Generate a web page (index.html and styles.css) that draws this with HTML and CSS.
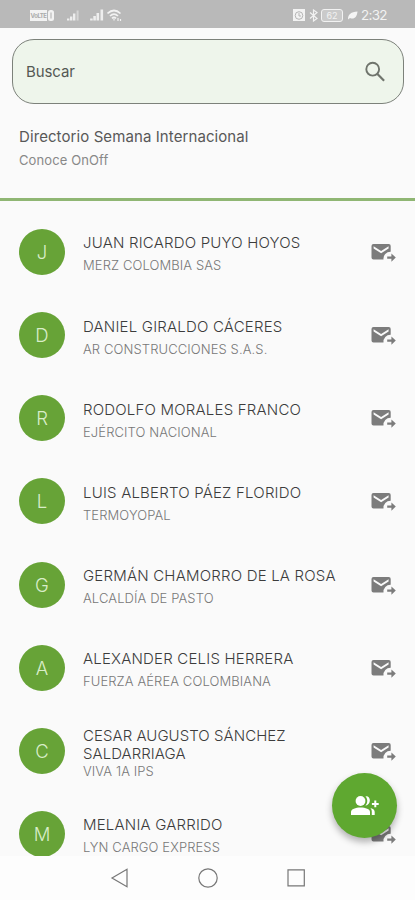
FILE: index.html
```html
<!DOCTYPE html>
<html lang="es">
<head>
    <meta charset="UTF-8">
    <meta name="viewport" content="width=device-width, initial-scale=1.0">
    <title>Directorio Semana Internacional</title>
    <link rel="stylesheet" href="styles.css">
</head>
<body>
    <svg class="symbols" aria-hidden="true">
        <symbol id="forward" viewBox="0 0 26 20">
            <path d="M2.500 1h15.200a2 2 0 0 1 2 2v5.700a7 7 0 0 0-7.200 7.800H2.500a2 2 0 0 1-2-2V3a2 2 0 0 1 2-2zM2.600 3.300v2.200l7.500 4.800 7.500-4.800V3.300l-7.500 4.800z" fill="#7c7c7c" fill-rule="evenodd"/>
            <path d="M16.200 13.400h4.200v-2.900l4.400 4.100-4.400 4.100v-2.900h-4.200z" fill="#7c7c7c"/>
        </symbol>
    </svg>
    <div class="phone">
        <div class="status-bar">
            <div class="status-left">
                <span class="volte">VoLTE</span>
                <svg class="sim" width="8" height="11" viewBox="0 0 8 11"><rect x="1" y="0" width="6" height="11" rx="2.500" fill="#f2f2f2"/><path d="M4 2.500v6" stroke="#b9b9b9" stroke-width="1.200"/></svg>
                <svg class="signal" width="14" height="12" viewBox="0 0 14 12"><path d="M2.200 11.500V9.500M5.200 11.500V7.500M8.200 11.500V4.500" stroke="#eee" stroke-width="2.400"/><path d="M11.600 11.500V1.500" stroke="#d6d6d6" stroke-width="2"/></svg>
                <svg class="signal-full" width="14" height="12" viewBox="0 0 14 12"><path d="M1.400 11.500V9.500M4.600 11.500V7M7.800 11.500V4M11.800 11.500V.5" stroke="#eee" stroke-width="2.600"/></svg>
                <svg width="16" height="13" viewBox="0 0 16 13" fill="none" stroke="#f2f2f2" stroke-width="1.700"><path d="M.5 4.500Q7 -1.500 13.500 4.500M3 7Q7 3 11 7M5 9.400Q7 7.400 9 9.400"/><path d="M7 9.500v2M11 12V9M13.500 12v-2" stroke-width="1.200"/></svg>
            </div>
            <div class="status-right">
                <svg width="12" height="12" viewBox="0 0 12 12"><path d="M0 0h12v12H0z" fill="#f2f2f2"/><circle cx="6" cy="6.500" r="3.800" fill="none" stroke="#b5b5b5"/><path d="M6 4v3h2" fill="none" stroke="#b5b5b5"/></svg>
                <svg width="9" height="13" viewBox="0 0 9 13"><path d="M1 3.500l7 6L4.500 12V1L8 3.500l-7 6" fill="none" stroke="#f2f2f2" stroke-width="1.200"/></svg>
                <span class="battery">62</span>
                <svg class="leaf" width="10" height="9" viewBox="0 0 10 9"><path d="M0 8.500C0 3 3 1 9.500.500 9 6 6 9 2 7z" fill="#f5f5f5"/></svg>
                <span class="clock">2:32</span>
            </div>
        </div>

        <main class="content">
            <div class="search">
                <span>Buscar</span>
                <svg width="22" height="22" viewBox="0 0 22 22" fill="none" stroke="#6f746c"><circle cx="8.700" cy="8.200" r="6.400" stroke-width="1.900"/><path d="M13.200 12.700l6.900 7" stroke-width="2.200"/></svg>
            </div>
            <header class="heading">
                <h1>Directorio Semana Internacional</h1>
                <p>Conoce OnOff</p>
            </header>
            <ul class="contacts">
                <li class="contact">
                    <div class="avatar">J</div>
                    <div class="info"><h2>JUAN RICARDO PUYO HOYOS</h2><p>MERZ COLOMBIA SAS</p></div>
                    <svg class="mail"><use href="#forward"/></svg>
                </li>
                <li class="contact">
                    <div class="avatar">D</div>
                    <div class="info"><h2>DANIEL GIRALDO CÁCERES</h2><p>AR CONSTRUCCIONES S.A.S.</p></div>
                    <svg class="mail"><use href="#forward"/></svg>
                </li>
                <li class="contact">
                    <div class="avatar">R</div>
                    <div class="info"><h2>RODOLFO MORALES FRANCO</h2><p>EJÉRCITO NACIONAL</p></div>
                    <svg class="mail"><use href="#forward"/></svg>
                </li>
                <li class="contact">
                    <div class="avatar">L</div>
                    <div class="info"><h2>LUIS ALBERTO PÁEZ FLORIDO</h2><p>TERMOYOPAL</p></div>
                    <svg class="mail"><use href="#forward"/></svg>
                </li>
                <li class="contact">
                    <div class="avatar">G</div>
                    <div class="info"><h2>GERMÁN CHAMORRO DE LA ROSA</h2><p>ALCALDÍA DE PASTO</p></div>
                    <svg class="mail"><use href="#forward"/></svg>
                </li>
                <li class="contact">
                    <div class="avatar">A</div>
                    <div class="info"><h2>ALEXANDER CELIS HERRERA</h2><p>FUERZA AÉREA COLOMBIANA</p></div>
                    <svg class="mail"><use href="#forward"/></svg>
                </li>
                <li class="contact two-line">
                    <div class="avatar">C</div>
                    <div class="info"><h2>CESAR AUGUSTO SÁNCHEZ SALDARRIAGA</h2><p>VIVA 1A IPS</p></div>
                    <svg class="mail"><use href="#forward"/></svg>
                </li>
                <li class="contact">
                    <div class="avatar">M</div>
                    <div class="info"><h2>MELANIA GARRIDO</h2><p>LYN CARGO EXPRESS</p></div>
                    <svg class="mail"><use href="#forward"/></svg>
                </li>
            </ul>
        </main>

        <button class="fab" aria-label="Agregar contacto">
            <svg width="30" height="22" viewBox="0 0 30 22" fill="#fff">
                <circle cx="10.500" cy="6" r="4.900"/>
                <path d="M1 20v-3c0-3 4.500-4.500 9.500-4.500s9.500 1.500 9.500 4.500v3z"/>
                <path d="M15.400 1.300c5.600-1 6.300 8.300 0 9.400 2.500-2.700 2.500-6.700 0-9.400zM20.300 13c3.200.700 4.400 2.100 4.400 4v3h-2.900v-3c0-1.700-.500-3-1.500-4z"/>
                <path d="M24.300 5.500h2v2.400h2.400v2h-2.400v2.400h-2V9.900h-2.400v-2h2.400z"/>
            </svg>
        </button>

        <nav class="nav-bar">
            <svg width="20" height="20" viewBox="0 0 20 20"><path d="M2 10L17 1.300v17.400z"/></svg>
            <svg width="20" height="20" viewBox="0 0 20 20"><circle cx="10" cy="10" r="9.200"/></svg>
            <svg width="20" height="20" viewBox="0 0 20 20"><path d="M2 1.800h16.300v16H2z"/></svg>
        </nav>
    </div>
</body>
</html>
```
FILE: styles.css
```css
body {
    margin: 0;
    font-family: Inter, "Noto Sans", sans-serif;
    background-color: #fafafa;
}

h1, h2, p, ul {
    margin: 0;
    padding: 0;
    font-weight: 400;
}

.symbols {
    display: none;
}

.phone {
    position: relative;
    display: flex;
    flex-direction: column;
    width: 415px;
    height: 900px;
    overflow: hidden;
}

.status-bar {
    flex: none;
    display: flex;
    justify-content: space-between;
    box-sizing: border-box;
    height: 28px;
    padding: 2px 29px 0 30px;
    background-color: #b9b9b9;
    color: #f2f2f2;
}

.status-left, .status-right {
    display: flex;
    align-items: center;
}

.volte {
    width: 17px;
    height: 11px;
    background-color: #f2f2f2;
    color: #aaa;
    font-size: 6px;
    font-weight: 700;
    line-height: 11px;
    text-align: center;
    letter-spacing: -0.5px;
}

.sim {
    margin-right: 11px;
}

.signal {
    margin-right: 10px;
}

.signal-full {
    margin-right: 3px;
}

.status-right {
    gap: 3.5px;
}

.status-right .leaf {
    margin-left: 1px;
}

.battery {
    width: 20px;
    height: 11px;
    border: 1px solid #f2f2f2;
    border-radius: 3px;
    background-color: #cacaca;
    font-size: 9px;
    line-height: 11px;
    text-align: center;
}

.clock {
    width: 25px;
    font-size: 13.5px;
    letter-spacing: -0.7px;
    white-space: nowrap;
}

.content {
    flex: none;
    height: 828px;
    overflow: hidden;
}

.search {
    display: flex;
    align-items: center;
    justify-content: space-between;
    box-sizing: border-box;
    height: 65px;
    margin: 11px 11px 0 12px;
    padding: 0 17px 0 13px;
    border: 1px solid #7c817a;
    border-radius: 22px;
    background-color: #eef5eb;
    color: #555954;
    font-size: 15px;
    letter-spacing: -0.1px;
}

.heading {
    box-sizing: border-box;
    height: 97px;
    padding: 23px 19px 0;
    border-bottom: 3px solid #8fb673;
}

.heading h1 {
    color: #585858;
    font-size: 15px;
    line-height: 20px;
    letter-spacing: 0.09px;
}

.heading p {
    margin-top: 4px;
    color: #888;
    font-size: 13px;
    line-height: 18px;
    letter-spacing: 0.1px;
}

.contacts {
    padding-top: 9.4px;
    list-style: none;
}

.contact {
    display: flex;
    align-items: center;
    box-sizing: border-box;
    height: 83.15px;
    padding: 0 18px 0 19px;
}

.avatar {
    flex: none;
    width: 46px;
    height: 46px;
    margin-right: 18px;
    border-radius: 50%;
    background-color: #67a337;
    color: #d9edc9;
    font-size: 18.5px;
    font-weight: 300;
    line-height: 47px;
    text-align: center;
}

.info {
    flex: 1;
    padding-top: 4px;
}

.info h2 {
    max-width: 260px;
    color: #3c3c3c;
    font-size: 15px;
    font-weight: 300;
    line-height: 19px;
    letter-spacing: 0.2px;
}

.info p {
    margin-top: 5px;
    color: #777;
    font-size: 13px;
    font-weight: 300;
    line-height: 17px;
    letter-spacing: 0.1px;
}

.two-line .info h2 {
    line-height: 18px;
    letter-spacing: 0.05px;
}

.two-line .info p {
    margin-top: 0;
    line-height: 16px;
}

.mail {
    flex: none;
    width: 26px;
    height: 20px;
    margin-top: 2px;
}

.fab {
    position: absolute;
    right: 18px;
    bottom: 62px;
    display: flex;
    align-items: center;
    justify-content: center;
    width: 65px;
    height: 65px;
    padding: 0;
    border: none;
    border-radius: 50%;
    background-color: #5fa830;
    box-shadow: 0 4px 7px rgba(0, 0, 0, 0.3);
}

.nav-bar {
    flex: none;
    display: flex;
    justify-content: center;
    align-items: center;
    gap: 68px;
    height: 44px;
    background-color: #fdfdfd;
}

.nav-bar svg {
    fill: none;
    stroke: #777;
    stroke-width: 1.2;
}
```
